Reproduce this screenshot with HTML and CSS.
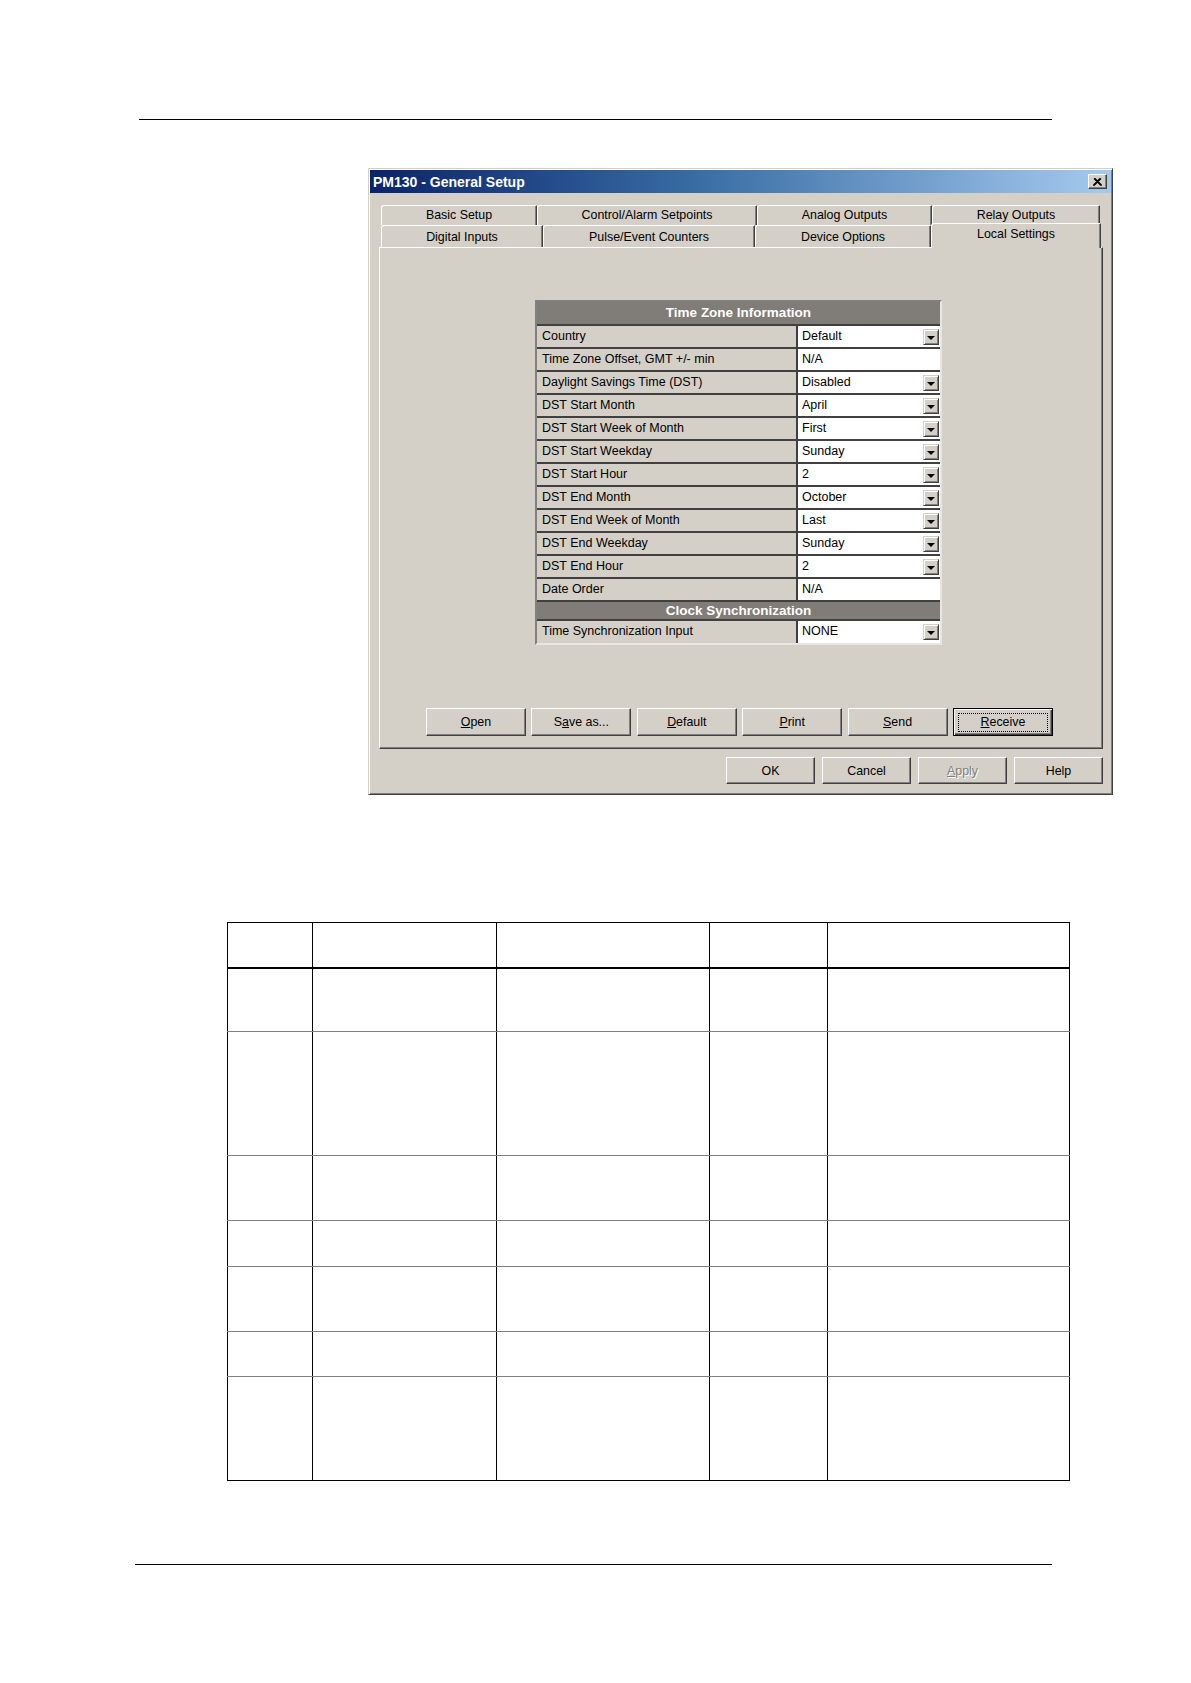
FILE: index.html
```html
<!DOCTYPE html>
<html lang="en">
<head>
<meta charset="utf-8">
<title>PM130 - General Setup</title>
<link rel="stylesheet" href="styles.css">
</head>
<body>
<div class="page">
  <div class="rule rule-top"></div>

  <div class="dialog">
    <div class="titlebar">
      <span class="title">PM130 - General Setup</span>
      <span class="close">
        <svg width="9" height="8" viewBox="0 0 9 8"><path d="M1 0.5L8 7.5M2 0.5L9 7.5M8 0.5L1 7.5M7 0.5L0 7.5" stroke="#000" stroke-width="1.1"/></svg>
      </span>
    </div>

    <div class="body">
      <div class="tabrow back">
        <div class="tab t-basic">Basic Setup</div>
        <div class="tab t-control">Control/Alarm Setpoints</div>
        <div class="tab t-analog">Analog Outputs</div>
        <div class="tab t-relay">Relay Outputs</div>
      </div>
      <div class="tabrow front">
        <div class="tab t-digital">Digital Inputs</div>
        <div class="tab t-pulse">Pulse/Event Counters</div>
        <div class="tab t-device">Device Options</div>
        <div class="tab t-local selected">Local Settings</div>
      </div>

      <div class="panel">
        <div class="grid">
          <div class="ghead">Time Zone Information</div>
          <div class="grow"><div class="glabel">Country</div><div class="gval">Default<span class="dd"><i></i></span></div></div>
          <div class="grow"><div class="glabel">Time Zone Offset, GMT +/- min</div><div class="gval">N/A</div></div>
          <div class="grow"><div class="glabel">Daylight Savings Time (DST)</div><div class="gval">Disabled<span class="dd"><i></i></span></div></div>
          <div class="grow"><div class="glabel">DST Start Month</div><div class="gval">April<span class="dd"><i></i></span></div></div>
          <div class="grow"><div class="glabel">DST Start Week of Month</div><div class="gval">First<span class="dd"><i></i></span></div></div>
          <div class="grow"><div class="glabel">DST Start Weekday</div><div class="gval">Sunday<span class="dd"><i></i></span></div></div>
          <div class="grow"><div class="glabel">DST Start Hour</div><div class="gval">2<span class="dd"><i></i></span></div></div>
          <div class="grow"><div class="glabel">DST End Month</div><div class="gval">October<span class="dd"><i></i></span></div></div>
          <div class="grow"><div class="glabel">DST End Week of Month</div><div class="gval">Last<span class="dd"><i></i></span></div></div>
          <div class="grow"><div class="glabel">DST End Weekday</div><div class="gval">Sunday<span class="dd"><i></i></span></div></div>
          <div class="grow"><div class="glabel">DST End Hour</div><div class="gval">2<span class="dd"><i></i></span></div></div>
          <div class="grow"><div class="glabel">Date Order</div><div class="gval">N/A</div></div>
          <div class="ghead small">Clock Synchronization</div>
          <div class="grow last"><div class="glabel">Time Synchronization Input</div><div class="gval">NONE<span class="dd"><i></i></span></div></div>
        </div>

        <div class="btnrow">
          <div class="btn w100"><span><u>O</u>pen</span></div>
          <div class="btn w100"><span>S<u>a</u>ve as...</span></div>
          <div class="btn w100"><span><u>D</u>efault</span></div>
          <div class="btn w100"><span><u>P</u>rint</span></div>
          <div class="btn w100"><span><u>S</u>end</span></div>
          <div class="btn w100 default"><span class="focus"></span><span><u>R</u>eceive</span></div>
        </div>
      </div>

      <div class="dlgbtns">
        <div class="btn w89"><span>OK</span></div>
        <div class="btn w89"><span>Cancel</span></div>
        <div class="btn w89 disabled"><span><u>A</u>pply</span></div>
        <div class="btn w89"><span>Help</span></div>
      </div>
    </div>
  </div>

  <table class="spec">
    <colgroup>
      <col class="c1"><col class="c2"><col class="c3"><col class="c4"><col class="c5">
    </colgroup>
    <tr class="h0"><td></td><td></td><td></td><td></td><td></td></tr>
    <tr class="h1"><td></td><td></td><td></td><td></td><td></td></tr>
    <tr class="h2"><td></td><td></td><td></td><td></td><td></td></tr>
    <tr class="h3"><td></td><td></td><td></td><td></td><td></td></tr>
    <tr class="h4"><td></td><td></td><td></td><td></td><td></td></tr>
    <tr class="h5"><td></td><td></td><td></td><td></td><td></td></tr>
    <tr class="h6"><td></td><td></td><td></td><td></td><td></td></tr>
    <tr class="h7"><td></td><td></td><td></td><td></td><td></td></tr>
  </table>

  <div class="rule rule-bottom"></div>
</div>
</body>
</html>
```

FILE: styles.css
```css
* { box-sizing: border-box; }

body {
  margin: 0;
  background: #fff;
  font-family: "Liberation Sans", Arial, sans-serif;
  color: #000;
}

.page {
  width: 1191px;
  height: 1683px;
  padding-top: 119px;
  overflow: hidden;
}

.rule { height: 1px; background: #000; }
.rule-top { margin-left: 139px; width: 913px; }
.rule-bottom { margin-left: 135px; width: 917px; margin-top: 83px; }

/* ---------- dialog window ---------- */
.dialog {
  margin: 48px 0 0 368px;
  width: 745px;
  height: 627px;
  background: #d4d0c8;
  border: 1px solid;
  border-color: #d4d0c8 #404040 #404040 #d4d0c8;
  box-shadow: inset 1px 1px #fff, inset -1px -1px #808080;
  padding: 1px;
  display: flex;
  flex-direction: column;
}

.titlebar {
  height: 23px;
  background: linear-gradient(to right, #0a246a 0%, #3a6ea5 45%, #a6caf0 100%);
  display: flex;
  align-items: center;
  justify-content: space-between;
  padding: 0 4px 0 3px;
}

.title {
  color: #fff;
  font-weight: bold;
  font-size: 14px;
  letter-spacing: 0;
}

.close {
  width: 19px;
  height: 15px;
  background: #d4d0c8;
  border: 1px solid;
  border-color: #fff #404040 #404040 #fff;
  box-shadow: inset -1px -1px #808080;
  display: flex;
  align-items: center;
  justify-content: center;
}

.body {
  flex: 1;
  padding: 12px 8px 0 9px;
  display: flex;
  flex-direction: column;
}

/* ---------- tabs ---------- */
.tabrow {
  display: flex;
  margin-left: 2px;
  font-size: 12.4px;
}

.tab {
  border-top: 1px solid #fff;
  border-left: 1px solid #fff;
  border-right: 1px solid #404040;
  box-shadow: inset -1px 0 #808080;
  border-top-left-radius: 3px;
  border-top-right-radius: 1px;
  text-align: center;
  background: #d4d0c8;
}

.back .tab { height: 20px; line-height: 19px; }
.front .tab { height: 22px; line-height: 22px; }

.t-basic { width: 156px; }
.t-control { width: 220px; }
.t-analog { width: 175px; }
.t-relay { width: 168px; }
.t-digital { width: 162px; }
.t-pulse { width: 212px; }
.t-device { width: 176px; }
.t-local { width: 170px; }

.front .tab.selected {
  height: 25px;
  margin-top: -2px;
  margin-bottom: -1px;
  line-height: 21px;
  position: relative;
  z-index: 2;
  box-shadow: inset -1px 0 #808080;
}

/* ---------- panel ---------- */
.panel {
  height: 502px;
  border: 1px solid;
  border-color: #fff #404040 #404040 #fff;
  box-shadow: inset -1px -1px #808080;
  padding-top: 52px;
  display: flex;
  flex-direction: column;
  position: relative;
  z-index: 1;
}

.grid {
  margin-left: 155px;
  width: 407px;
  border: 2px solid;
  border-color: #808080 #e8e6e2 #e8e6e2 #808080;
  box-shadow: inset 1px 1px #404040;
  font-size: 12.5px;
}

.ghead {
  height: 24px;
  background: #807c78;
  color: #fff;
  font-weight: bold;
  font-size: 13.5px;
  text-align: center;
  line-height: 22px;
  border-bottom: 2px solid #404040;
}

.ghead.small {
  height: 19px;
  line-height: 18px;
  border-bottom: 2px solid #404040;
}

.grow {
  height: 23px;
  display: flex;
  border-bottom: 2px solid #404040;
}

.grow.last { height: 22px; border-bottom: 0; }

.glabel {
  width: 261px;
  background: #d4d0c8;
  border-right: 2px solid #404040;
  padding-left: 5px;
  line-height: 21px;
  white-space: nowrap;
}

.gval {
  flex: 1;
  background: #fff;
  padding-left: 4px;
  line-height: 21px;
  display: flex;
  align-items: flex-start;
  justify-content: space-between;
}

.dd {
  width: 16px;
  height: 16px;
  margin: 3px 1px 0 0;
  background: #d4d0c8;
  border: 1px solid;
  border-color: #d4d0c8 #404040 #404040 #d4d0c8;
  box-shadow: inset 1px 1px #fff, inset -1px -1px #808080;
  display: flex;
  align-items: center;
  justify-content: center;
}

.dd i {
  width: 0;
  height: 0;
  border-left: 4px solid transparent;
  border-right: 4px solid transparent;
  border-top: 4px solid #000;
  margin-top: 1px;
}

/* ---------- buttons ---------- */
.btnrow {
  margin: 63px 0 0 46px;
  display: flex;
  gap: 5.4px;
}

.btn {
  height: 28px;
  background: #d4d0c8;
  border: 1px solid;
  border-color: #fff #404040 #404040 #fff;
  box-shadow: inset -1px -1px #808080;
  font-size: 12.4px;
  display: flex;
  align-items: center;
  justify-content: center;
  position: relative;
}

.w100 { width: 100px; }
.w89 { width: 89px; height: 27px; }

.btn.default {
  border: 1px solid #000;
  box-shadow: inset 1px 1px #fff, inset -1px -1px #404040, inset -2px -2px #808080;
}

.btn .focus {
  position: absolute;
  left: 4px;
  right: 4px;
  top: 4px;
  bottom: 3px;
  border: 1px dotted #000;
}

.btn.disabled {
  color: #808080;
  text-shadow: 1px 1px #fff;
}

.dlgbtns {
  margin-top: 8px;
  display: flex;
  justify-content: flex-end;
  gap: 7px;
  padding-right: 0;
}

/* ---------- spec table ---------- */
.spec {
  margin: 127px 0 0 227px;
  width: 842px;
  border-collapse: collapse;
  table-layout: fixed;
  border: 1px solid #000;
}

.spec td {
  border-left: 1px solid #000;
  border-right: 1px solid #000;
  border-bottom: 1px solid #808080;
  padding: 0;
}

.spec .h0 td { border-bottom: 2px solid #000; }
.spec .h7 td { border-bottom: 1px solid #000; }

.c1 { width: 85px; }
.c2 { width: 184px; }
.c3 { width: 213px; }
.c4 { width: 118px; }
.c5 { width: 242px; }

.h0 { height: 45px; }
.h1 { height: 64px; }
.h2 { height: 124px; }
.h3 { height: 65px; }
.h4 { height: 46px; }
.h5 { height: 65px; }
.h6 { height: 45px; }
.h7 { height: 104px; }
```
